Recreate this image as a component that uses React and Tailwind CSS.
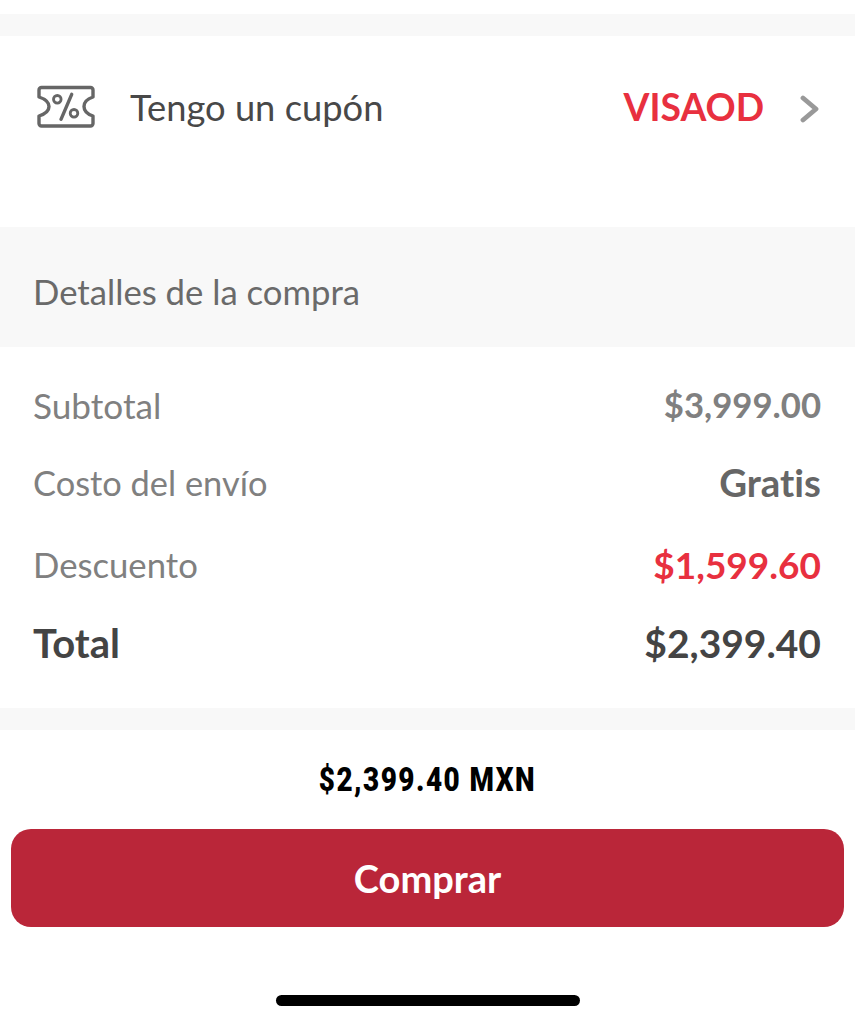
const lato = "font-['Lato',sans-serif] [font-variant-ligatures:none]";

function CouponIcon() {
  return (
    <svg width="60" height="44" viewBox="0 0 60 44" fill="none" stroke="#666" strokeWidth="3.400" strokeLinecap="round" strokeLinejoin="round">
      <path d="M4.500 2.500H53.500a2.500 2.500 0 0 1 2.500 2.500V12C50 14 47 17 47 21.500S50 29 56 31V38.500a2.500 2.500 0 0 1-2.500 2.500H4.500a2.500 2.500 0 0 1-2.500-2.500V31C8 29 12 26 12 21.500S8 14 2 12V5a2.500 2.500 0 0 1 2.500-2.500Z" />
      <circle cx="20.300" cy="14.300" r="3.800" strokeWidth="2.800" />
      <circle cx="37" cy="28.300" r="3.800" strokeWidth="2.800" />
      <path d="M34.700 9.300 24 34.300" />
    </svg>
  );
}

function Row({ label, value, className, labelClass, valueClass }) {
  return (
    <div className={`flex items-center justify-between ${className}`}>
      <span className={labelClass}>{label}</span>
      <span className={valueClass}>{value}</span>
    </div>
  );
}

export default function App() {
  return (
    <div className={`${lato} flex h-[1024px] w-[855px] flex-col overflow-hidden bg-white`}>
      <div className="mt-[14px] h-[22px] bg-[#f8f8f8]" />
      <div className="flex h-[191px] items-start pl-[37px] pr-[35px] pt-[49px]">
        <CouponIcon />
        <span className="ml-[33px] -mt-[1px] text-[36.300px] leading-[46px] text-[#484848]">Tengo un cupón</span>
        <span className="ml-auto -mt-[1px] text-[37.300px] font-bold leading-[46px] text-[#e8303f]">VISAOD</span>
        <svg className="ml-[36px] mt-[10px]" width="20" height="28" viewBox="0 0 20 28" fill="none" stroke="#999" strokeWidth="4.800" strokeLinecap="round" strokeLinejoin="round">
          <path d="M3 3l13 11L3 25" />
        </svg>
      </div>
      <div className="flex h-[120px] items-center bg-[#f8f8f8] px-[33px] pt-[10px] text-[34.700px] text-[#6a6a6a]">Detalles de la compra</div>
      <div className="flex flex-col pl-[33px] pr-[34px] pt-[35px] text-[34.700px]">
        <Row className="h-[46px]" label="Subtotal" value="$3,999.00" labelClass="text-[35.200px] text-[#808080]" valueClass="font-bold text-[#808080]" />
        <Row className="mt-[32px] h-[46px]" label="Costo del envío" value="Gratis" labelClass="text-[34.400px] text-[#808080]" valueClass="text-[38.400px] font-bold text-[#666]" />
        <Row className="mt-[36px] h-[46px]" label="Descuento" value="$1,599.60" labelClass="text-[#808080]" valueClass="text-[37px] font-bold text-[#e8303f]" />
        <Row className="mt-[32px] h-[46px] font-bold text-[#444]" label="Total" value="$2,399.40" labelClass="text-[40px]" valueClass="text-[39px]" />
      </div>
      <div className="mt-[42px] h-[22px] bg-[#f8f8f8]" />
      <div className="flex h-[99px] items-center justify-center font-['Roboto',sans-serif] text-[34px] font-black tracking-[1.800px] text-black">
        <span className="scale-x-[0.82] whitespace-nowrap">$2,399.40 MXN</span>
      </div>
      <button className="mx-[11px] flex h-[98px] w-[833px] items-center justify-center rounded-[20px] bg-[#ba2639] text-[38px] font-bold text-white">Comprar</button>
      <div className="mx-auto mt-[68px] h-[11px] w-[304px] rounded-full bg-black" />
    </div>
  );
}
